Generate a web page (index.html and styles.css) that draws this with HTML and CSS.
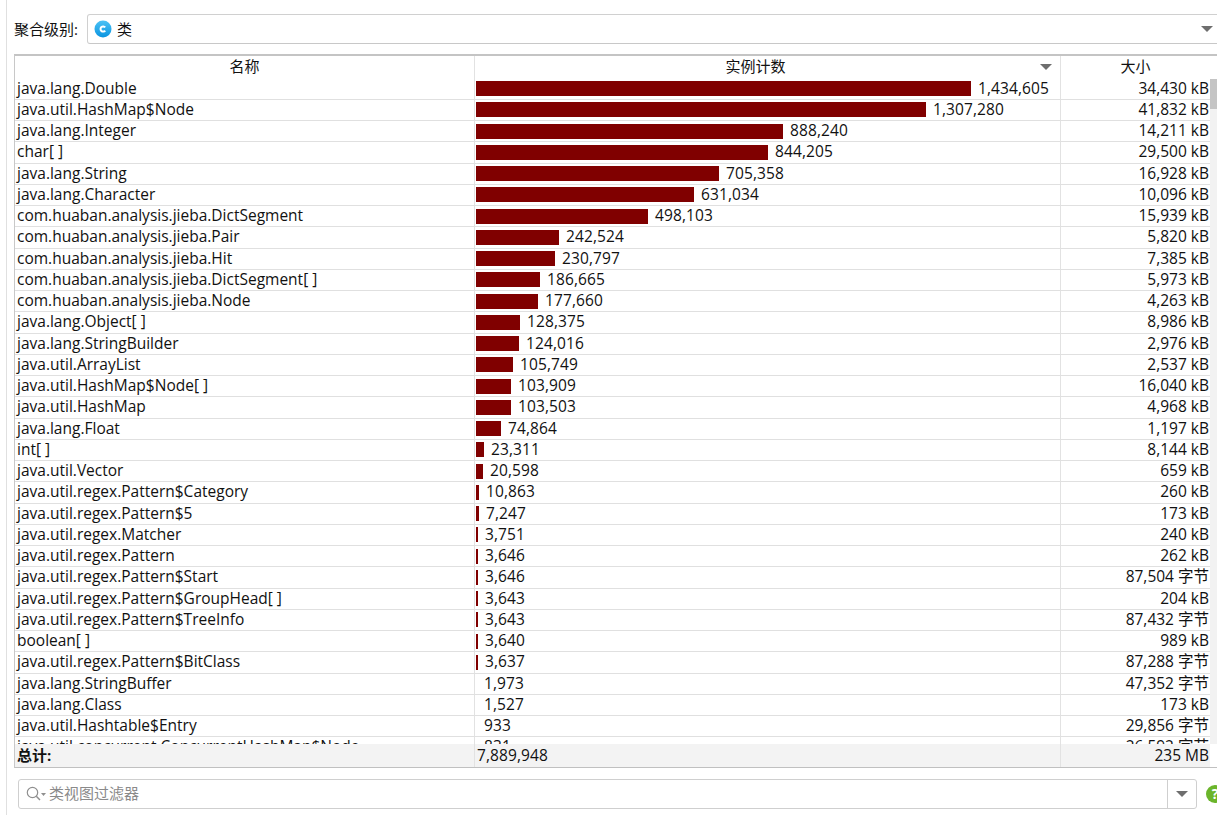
FILE: index.html
```
<!DOCTYPE html>
<html lang="zh">
<head>
<meta charset="utf-8">
<title>类</title>
<link rel="stylesheet" href="styles.css">
</head>
<body>
<div class="app">
  <div class="level">
    <span class="level-label">聚合级别:</span>
    <div class="combo">
      <svg class="c-icon" width="18" height="18" viewBox="0 0 18 18"><defs><linearGradient id="cg" x1="0" y1="0" x2="0" y2="1"><stop offset="0" stop-color="#4cc2f5"/><stop offset="1" stop-color="#0a94e0"/></linearGradient></defs><circle cx="9" cy="9" r="8.5" fill="url(#cg)"/><path d="M11.2 7.4A2.6 2.6 0 1 0 11.2 10.6" fill="none" stroke="#fff" stroke-width="2"/></svg>
      <span class="combo-text">类</span>
      <span class="arrow combo-arrow"></span>
    </div>
  </div>
  <div class="table">
    <div class="head">
      <div class="c-name hc">名称</div>
      <div class="c-count hc hc-count">实例计数<span class="arrow sort-arrow"></span></div>
      <div class="c-size hc">大小</div>
      <div class="sb-head"></div>
    </div>
    <div class="body-wrap">
      <div class="rows">
        <div class="row"><div class="c-name">java.lang.Double</div><div class="c-count"><i class="bar" style="width:495px"></i>1,434,605</div><div class="c-size">34,430 kB</div></div>
        <div class="row"><div class="c-name">java.util.HashMap$Node</div><div class="c-count"><i class="bar" style="width:450px"></i>1,307,280</div><div class="c-size">41,832 kB</div></div>
        <div class="row"><div class="c-name">java.lang.Integer</div><div class="c-count"><i class="bar" style="width:307px"></i>888,240</div><div class="c-size">14,211 kB</div></div>
        <div class="row"><div class="c-name">char[ ]</div><div class="c-count"><i class="bar" style="width:292px"></i>844,205</div><div class="c-size">29,500 kB</div></div>
        <div class="row"><div class="c-name">java.lang.String</div><div class="c-count"><i class="bar" style="width:243px"></i>705,358</div><div class="c-size">16,928 kB</div></div>
        <div class="row"><div class="c-name">java.lang.Character</div><div class="c-count"><i class="bar" style="width:218px"></i>631,034</div><div class="c-size">10,096 kB</div></div>
        <div class="row"><div class="c-name">com.huaban.analysis.jieba.DictSegment</div><div class="c-count"><i class="bar" style="width:172px"></i>498,103</div><div class="c-size">15,939 kB</div></div>
        <div class="row"><div class="c-name">com.huaban.analysis.jieba.Pair</div><div class="c-count"><i class="bar" style="width:83px"></i>242,524</div><div class="c-size">5,820 kB</div></div>
        <div class="row"><div class="c-name">com.huaban.analysis.jieba.Hit</div><div class="c-count"><i class="bar" style="width:79px"></i>230,797</div><div class="c-size">7,385 kB</div></div>
        <div class="row"><div class="c-name">com.huaban.analysis.jieba.DictSegment[ ]</div><div class="c-count"><i class="bar" style="width:64px"></i>186,665</div><div class="c-size">5,973 kB</div></div>
        <div class="row"><div class="c-name">com.huaban.analysis.jieba.Node</div><div class="c-count"><i class="bar" style="width:62px"></i>177,660</div><div class="c-size">4,263 kB</div></div>
        <div class="row"><div class="c-name">java.lang.Object[ ]</div><div class="c-count"><i class="bar" style="width:44px"></i>128,375</div><div class="c-size">8,986 kB</div></div>
        <div class="row"><div class="c-name">java.lang.StringBuilder</div><div class="c-count"><i class="bar" style="width:43px"></i>124,016</div><div class="c-size">2,976 kB</div></div>
        <div class="row"><div class="c-name">java.util.ArrayList</div><div class="c-count"><i class="bar" style="width:37px"></i>105,749</div><div class="c-size">2,537 kB</div></div>
        <div class="row"><div class="c-name">java.util.HashMap$Node[ ]</div><div class="c-count"><i class="bar" style="width:35px"></i>103,909</div><div class="c-size">16,040 kB</div></div>
        <div class="row"><div class="c-name">java.util.HashMap</div><div class="c-count"><i class="bar" style="width:35px"></i>103,503</div><div class="c-size">4,968 kB</div></div>
        <div class="row"><div class="c-name">java.lang.Float</div><div class="c-count"><i class="bar" style="width:25px"></i>74,864</div><div class="c-size">1,197 kB</div></div>
        <div class="row"><div class="c-name">int[ ]</div><div class="c-count"><i class="bar" style="width:8px"></i>23,311</div><div class="c-size">8,144 kB</div></div>
        <div class="row"><div class="c-name">java.util.Vector</div><div class="c-count"><i class="bar" style="width:7px"></i>20,598</div><div class="c-size">659 kB</div></div>
        <div class="row"><div class="c-name">java.util.regex.Pattern$Category</div><div class="c-count"><i class="bar" style="width:3px"></i>10,863</div><div class="c-size">260 kB</div></div>
        <div class="row"><div class="c-name">java.util.regex.Pattern$5</div><div class="c-count"><i class="bar" style="width:3px"></i>7,247</div><div class="c-size">173 kB</div></div>
        <div class="row"><div class="c-name">java.util.regex.Matcher</div><div class="c-count"><i class="bar" style="width:2px"></i>3,751</div><div class="c-size">240 kB</div></div>
        <div class="row"><div class="c-name">java.util.regex.Pattern</div><div class="c-count"><i class="bar" style="width:2px"></i>3,646</div><div class="c-size">262 kB</div></div>
        <div class="row"><div class="c-name">java.util.regex.Pattern$Start</div><div class="c-count"><i class="bar" style="width:2px"></i>3,646</div><div class="c-size">87,504 字节</div></div>
        <div class="row"><div class="c-name">java.util.regex.Pattern$GroupHead[ ]</div><div class="c-count"><i class="bar" style="width:2px"></i>3,643</div><div class="c-size">204 kB</div></div>
        <div class="row"><div class="c-name">java.util.regex.Pattern$TreeInfo</div><div class="c-count"><i class="bar" style="width:2px"></i>3,643</div><div class="c-size">87,432 字节</div></div>
        <div class="row"><div class="c-name">boolean[ ]</div><div class="c-count"><i class="bar" style="width:2px"></i>3,640</div><div class="c-size">989 kB</div></div>
        <div class="row"><div class="c-name">java.util.regex.Pattern$BitClass</div><div class="c-count"><i class="bar" style="width:2px"></i>3,637</div><div class="c-size">87,288 字节</div></div>
        <div class="row"><div class="c-name">java.lang.StringBuffer</div><div class="c-count"><i class="bar nobar" style="width:1px"></i>1,973</div><div class="c-size">47,352 字节</div></div>
        <div class="row"><div class="c-name">java.lang.Class</div><div class="c-count"><i class="bar nobar" style="width:1px"></i>1,527</div><div class="c-size">173 kB</div></div>
        <div class="row"><div class="c-name">java.util.Hashtable$Entry</div><div class="c-count"><i class="bar nobar" style="width:1px"></i>933</div><div class="c-size">29,856 字节</div></div>
        <div class="row"><div class="c-name">java.util.concurrent.ConcurrentHashMap$Node</div><div class="c-count"><i class="bar nobar" style="width:1px"></i>831</div><div class="c-size">26,592 字节</div></div>
      </div>
      <div class="scrollbar"><div class="thumb"></div></div>
    </div>
    <div class="foot">
      <div class="c-name total">总计:</div>
      <div class="c-count foot-count">7,889,948</div>
      <div class="c-size">235 MB</div>
      <div class="sb-head"></div>
    </div>
  </div>
  <div class="filter-row">
    <div class="filter">
      <svg class="search" width="21" height="16" viewBox="0 0 21 16"><circle cx="6.5" cy="6.5" r="5.2" fill="none" stroke="#8f8f8f" stroke-width="1.2"/><path d="M10.3 10.3L14 14" stroke="#8f8f8f" stroke-width="1.5"/><path d="M15 7h5l-2.5 3z" fill="#8f8f8f"/></svg>
      <span class="placeholder">类视图过滤器</span>
      <div class="filter-btn"><span class="arrow"></span></div>
    </div>
    <div class="help">?</div>
  </div>
</div>
</body>
</html>
```
FILE: styles.css
```
html, body {
  margin: 0;
  padding: 0;
  width: 1217px;
  height: 815px;
  overflow: hidden;
  background: #fff;
}
body {
  font-family: "Open Sans", "Noto Sans CJK SC", sans-serif;
  font-size: 15.5px;
  color: #111;
}
.app {
  height: 815px;
  box-sizing: border-box;
  margin-left: 6px;
  border-left: 1px solid #e0e0e0;
  padding: 14px 0 7px 7px;
  display: flex;
  flex-direction: column;
  width: 1220px;
}
.level {
  display: flex;
  align-items: center;
  height: 30px;
  gap: 8px;
}
.level-label { font-size: 15px; width: 65px; padding-bottom: 2px; }
.combo {
  flex: 1;
  height: 30px;
  box-sizing: border-box;
  border: 1px solid #d0d0d0;
  border-bottom-color: #c8c8c8;
  border-radius: 3px;
  display: flex;
  align-items: center;
  padding-left: 6px;
  gap: 5px;
  font-size: 15px;
  position: relative;
  margin-right: -4px;
}
.combo-text { padding-bottom: 2px; }
.arrow {
  display: inline-block;
  width: 0;
  height: 0;
  border-left: 6px solid transparent;
  border-right: 6px solid transparent;
  border-top: 6px solid #6e6e6e;
}
.combo-arrow { position: absolute; left: 1113px; top: 11px; }
.table {
  margin-top: 10px;
  height: 714px;
  flex: none;
  box-sizing: border-box;
  border-top: 2px solid #c4c4c4;
  border-left: 1px solid #c8c8c8;
  border-bottom: 1px solid #c0c0c0;
  display: flex;
  flex-direction: column;
  width: 1203px;
}
.head, .foot, .row { display: flex; }
.head { height: 22.5px; flex: none; }
.c-name { width: 460px; padding-left: 2px; box-sizing: border-box; flex: none; white-space: nowrap; border-right: 1px solid #e2e2e2; }
.c-count { width: 586px; padding-left: 1px; box-sizing: border-box; flex: none; white-space: nowrap; display: flex; align-items: flex-start; border-right: 1px solid #e2e2e2; letter-spacing: 0.1px; }
.c-size { width: 149px; padding-right: 1px; box-sizing: border-box; flex: none; text-align: right; white-space: nowrap; }
.hc { text-align: center; display: block; padding: 0; line-height: 20px; font-size: 15px; position: relative; letter-spacing: 0; }
.hc-count { padding-right: 24px; }
.sort-arrow { position: absolute; right: 8px; top: 8px; }
.sb-head { width: 7px; flex: none; background: #fff; }
.body-wrap { flex: 1; display: flex; min-height: 0; overflow: hidden; }
.rows { width: 1195px; flex: none; }
.row { height: 21.25px; box-sizing: border-box; border-bottom: 1px solid #e0e0e0; line-height: 18px; }
.bar { display: block; height: 15px; background: #800000; margin: 2.6px 7px 0 0; flex: none; }
.nobar { background: transparent; }
.scrollbar { width: 7px; background: #f2f2f2; flex: none; }
.thumb { height: 30px; background: #c4c4c4; }
.foot {
  height: 23px;
  flex: none;
  background: #f3f3f3;
  line-height: 23px;
}
.total { font-weight: 700; font-size: 15px; }
.foot-count { padding-left: 2px; }
.filter-row { display: flex; align-items: center; margin-top: 11px; padding-left: 4px; gap: 9px; }
.filter {
  width: 1179px;
  height: 30px;
  box-sizing: border-box;
  border: 1px solid #cfcfcf;
  border-radius: 3px;
  display: flex;
  align-items: center;
  padding-left: 7px;
  flex: none;
}
.search { flex: none; margin-right: 2px; }
.placeholder { color: #8a8a8a; font-size: 15px; flex: 1; padding-bottom: 3px; }
.filter-btn { width: 28px; height: 28px; border-left: 1px solid #cfcfcf; display: flex; align-items: center; justify-content: center; flex: none; }
.help {
  width: 18px;
  height: 18px;
  border-radius: 50%;
  background: #6bb52b;
  color: #fff;
  font-weight: 700;
  font-size: 14px;
  line-height: 18px;
  text-align: center;
  flex: none;
}
```
